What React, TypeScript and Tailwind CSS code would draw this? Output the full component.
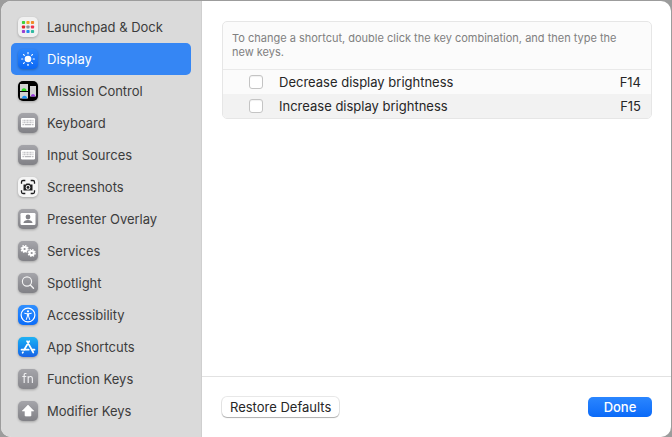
import { useState, type ReactNode } from "react";

type Category = { name: string; icon: ReactNode };

const TILE = "block size-5 shrink-0 rounded-[5px] drop-shadow-[0_1px_1px_rgba(0,0,0,0.25)]";
const GRAY = "bg-linear-to-b from-[#a5a5aa] to-[#818186]";
const BLUE = "bg-linear-to-b from-[#2f8fff] to-[#0a6cf8]";

function Tile({ tone, children }: { tone: string; children: ReactNode }) {
  return (
    <svg viewBox="0 0 20 20" aria-hidden="true" className={`${TILE} ${tone}`}>
      {children}
    </svg>
  );
}

const DOT_COLORS = [
  "#3ed13a", "#f5a623", "#f08a2a",
  "#e0252b", "#8d9095", "#f0304f",
  "#9a3fd0", "#1f8df0", "#2fb9a0",
];

function LaunchpadIcon() {
  return (
    <Tile tone="bg-[#f1f1f1]">
      {DOT_COLORS.map((color, i) => (
        <rect key={color} x={3.9 + (i % 3) * 4.5} y={3.9 + Math.floor(i / 3) * 4.5} width="3.2" height="3.2" rx="0.8" fill={color} />
      ))}
    </Tile>
  );
}

function DisplayIcon() {
  return (
    <Tile tone="bg-linear-to-b from-[#2b85fb] to-[#0a68f5]">
      <circle cx="10" cy="10" r="3.3" fill="#fff" />
      {[0, 45, 90, 135, 180, 225, 270, 315].map((angle) => (
        <path key={angle} d="M10 3.6v1.2" stroke="#fff" strokeWidth="1.1" strokeLinecap="round" transform={`rotate(${angle} 10 10)`} />
      ))}
    </Tile>
  );
}

function MissionControlIcon() {
  return (
    <Tile tone="bg-black">
      <rect x="2" y="3" width="8" height="7" fill="#d2d2d2" />
      <rect x="2" y="11" width="8" height="6.5" fill="#d2d2d2" />
      <rect x="12" y="5" width="6" height="10.5" fill="#d2d2d2" />
      <path d="M3.500 10a2.500 2.800 0 0 1 5 0z" fill="#2ee022" />
      <path d="M4 17.500a2.500 2.800 0 0 1 5 0z" fill="#1f94f5" />
      <path d="M12.800 15.500a2.200 2.600 0 0 1 4.400 0z" fill="#9638dc" />
    </Tile>
  );
}

function KeyboardIcon() {
  return (
    <Tile tone={GRAY}>
      <rect x="3" y="5" width="14" height="9.5" rx="1.2" fill="#fff" />
      <path d="M4.500 7.500h11M4.500 9.500h11" stroke="#c6c6c9" strokeWidth="1.4" strokeDasharray="1.100 0.400" />
      <path d="M4.500 11.700h1.400M6.700 11.700h6.600M14.100 11.700h1.400" stroke="#b6b6ba" strokeWidth="1.300" />
    </Tile>
  );
}

function ScreenshotsIcon() {
  return (
    <Tile tone="bg-[#f6f6f6]">
      <path d="M3.5 6.7V5a1.500 1.500 0 0 1 1.500-1.500h2.300M12.700 3.500H15A1.500 1.500 0 0 1 16.500 5v1.700M16.500 13.300V15a1.500 1.500 0 0 1-1.500 1.500h-2.300M7.300 16.500H5A1.500 1.500 0 0 1 3.500 15v-1.700" fill="none" stroke="#1d1d1f" strokeWidth="1.3" />
      <path fillRule="evenodd" d="M5.500 7.600h2.200l.8-1.200h3l.8 1.200h2.200v6h-9zM10 8a2.400 2.400 0 1 0 0 4.800A2.400 2.400 0 0 0 10 8z" fill="#1d1d1f" />
      <circle cx="10" cy="10.4" r="1.4" fill="#1d1d1f" />
    </Tile>
  );
}

function PresenterIcon() {
  return (
    <Tile tone={GRAY}>
      <rect x="2.5" y="4" width="15" height="12" rx="1.2" fill="#fff" />
      <circle cx="10" cy="8" r="2.4" fill="#838388" />
      <path d="M5.400 14c.3-2.200 2-3.100 4.600-3.100s4.300.9 4.600 3.100z" fill="#838388" />
    </Tile>
  );
}

function Gear({ x, y }: { x: number; y: number }) {
  return (
    <g transform={`translate(${x} ${y})`} fill="none" stroke="#fff">
      <circle r="2.1" strokeWidth="2" />
      <circle r="3.4" strokeWidth="1.3" strokeDasharray="1.500 1.170" />
    </g>
  );
}

function ServicesIcon() {
  return (
    <Tile tone={GRAY}>
      <Gear x={6.6} y={8} />
      <Gear x={13.7} y={12} />
    </Tile>
  );
}

function SpotlightIcon() {
  return (
    <Tile tone={GRAY}>
      <circle cx="9" cy="8.5" r="4.6" fill="none" stroke="#f4f4f4" strokeWidth="1.1" />
      <path d="M12.300 12l3.200 3.200" stroke="#f4f4f4" strokeWidth="1.4" strokeLinecap="round" />
    </Tile>
  );
}

function AccessibilityIcon() {
  return (
    <Tile tone={BLUE}>
      <circle cx="10" cy="10" r="6.9" fill="none" stroke="#fff" strokeWidth="1.2" />
      <circle cx="10" cy="6.3" r="1.1" fill="#fff" />
      <path d="M6.700 8.300l2.500.5h1.600l2.500-.5M9.400 9v2.300L8.300 14.500M10.600 9v2.300l1.100 3.200M10 9v2.300" fill="none" stroke="#fff" strokeWidth="1" strokeLinecap="round" strokeLinejoin="round" />
    </Tile>
  );
}

function AppShortcutsIcon() {
  return (
    <Tile tone="bg-linear-to-b from-[#1fb1f3] to-[#1a62e6]">
      <path d="M11.200 4.200L6 13M9 4.200l6.300 11.300M3.500 12.700h7.200M13.800 12.700h2.700M5 15.200l-.4.600" stroke="#fff" strokeWidth="1.7" strokeLinecap="round" />
    </Tile>
  );
}

function FunctionIcon() {
  return (
    <Tile tone="bg-linear-to-b from-[#a5a5aa] to-[#86868b]">
      <text x="10" y="14" textAnchor="middle" fontSize="12" fill="#f0f0f2">fn</text>
    </Tile>
  );
}

function ModifierIcon() {
  return (
    <Tile tone={GRAY}>
      <path d="M10 4l5.800 6H13v4.500a.6.6 0 0 1-.6.600H7.600a.6.6 0 0 1-.6-.600V10H4.200z" fill="#fff" stroke="#fff" strokeWidth="0.6" strokeLinejoin="round" />
    </Tile>
  );
}

const CATEGORIES: Category[] = [
  { name: "Launchpad & Dock", icon: <LaunchpadIcon /> },
  { name: "Display", icon: <DisplayIcon /> },
  { name: "Mission Control", icon: <MissionControlIcon /> },
  { name: "Keyboard", icon: <KeyboardIcon /> },
  { name: "Input Sources", icon: <KeyboardIcon /> },
  { name: "Screenshots", icon: <ScreenshotsIcon /> },
  { name: "Presenter Overlay", icon: <PresenterIcon /> },
  { name: "Services", icon: <ServicesIcon /> },
  { name: "Spotlight", icon: <SpotlightIcon /> },
  { name: "Accessibility", icon: <AccessibilityIcon /> },
  { name: "App Shortcuts", icon: <AppShortcutsIcon /> },
  { name: "Function Keys", icon: <FunctionIcon /> },
  { name: "Modifier Keys", icon: <ModifierIcon /> },
];

const SHORTCUTS = [
  { id: "decrease", label: "Decrease display brightness", keys: "F14" },
  { id: "increase", label: "Increase display brightness", keys: "F15" },
];

function Sidebar({ selected, onSelect }: { selected: string; onSelect: (name: string) => void }) {
  return (
    <nav className="w-[201px] shrink-0 border-r border-[#cfcfcf] bg-[#dadada] p-2.5">
      <ul>
        {CATEGORIES.map(({ name, icon }) => (
          <li key={name}>
            <button
              type="button"
              aria-current={name === selected ? "page" : undefined}
              onClick={() => onSelect(name)}
              className={`flex h-8 w-full items-center gap-[9px] rounded-[5px] px-[7px] text-left ${
                name === selected ? "bg-[#3586f4] text-white" : "text-[#3c3c3c]"
              }`}
            >
              {icon}
              {name}
            </button>
          </li>
        ))}
      </ul>
    </nav>
  );
}

function ShortcutPanel() {
  return (
    <section className="overflow-hidden rounded-[5px] border border-[#e6e6e6] bg-[#fbfbfb]">
      <p className="border-b border-[#e9e9e9] pt-[9px] pr-5 pb-2.5 pl-[9px] text-[11px] leading-[14px] text-[#808080]">
        To change a shortcut, double click the key combination, and then type the new keys.
      </p>
      <table className="w-full">
        <tbody>
          {SHORTCUTS.map(({ id, label, keys }) => (
            <tr key={id} className="h-6 even:bg-[#f2f2f2]">
              <td className="w-14 pl-[26px]">
                <input
                  id={id}
                  type="checkbox"
                  className="block size-3.5 appearance-none rounded-[3px] border border-[#c4c4c4] bg-white shadow-[inset_0_1px_1px_rgba(0,0,0,0.06)] checked:bg-[#0a6cf8]"
                />
              </td>
              <td>
                <label htmlFor={id}>{label}</label>
              </td>
              <td className="pr-2.5 text-right">{keys}</td>
            </tr>
          ))}
        </tbody>
      </table>
    </section>
  );
}

export default function App() {
  const [selected, setSelected] = useState("Display");
  return (
    <div className="flex min-h-screen bg-[#9c9c9c] px-px pt-px font-[Inter,sans-serif] text-[13px] leading-4 text-[#262626]">
      <div className="flex flex-1 overflow-hidden rounded-[10px] bg-white">
        <Sidebar selected={selected} onSelect={setSelected} />
        <main className="flex min-w-0 flex-1 flex-col">
          <div className="flex-1 p-5 pr-[19px]">
            <ShortcutPanel />
          </div>
          <footer className="flex items-start justify-between border-t border-[#e2e2e2] py-5 pr-[19px] pl-5">
            <button type="button" className="h-5 rounded-[5px] bg-white px-2 shadow-[0_0_0_1px_rgba(0,0,0,0.09),0_1px_1px_rgba(0,0,0,0.25)]">
              Restore Defaults
            </button>
            <button type="button" className="h-5 w-16 rounded-[5px] bg-linear-to-b from-[#2a86ff] to-[#0a6af8] font-medium text-white">
              Done
            </button>
          </footer>
        </main>
      </div>
    </div>
  );
}
